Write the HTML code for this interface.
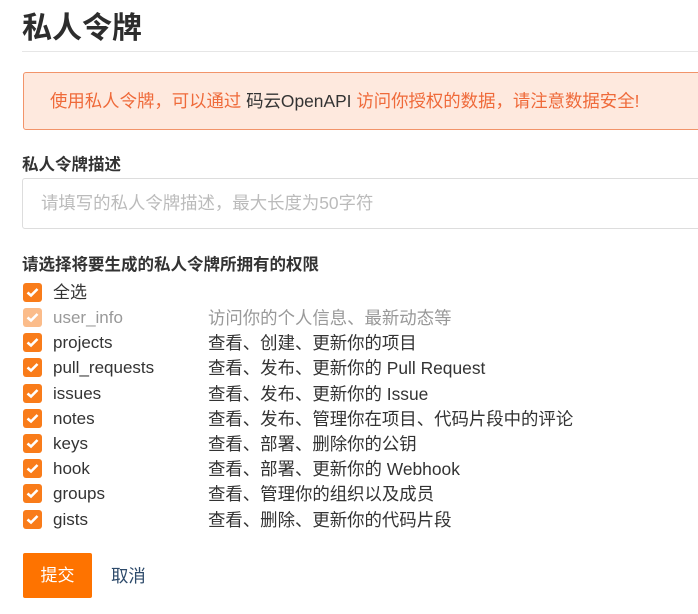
<!DOCTYPE html>
<html><head><meta charset="utf-8"><style>
body{margin:0;width:698px;height:614px;overflow:hidden;background:#fff;font-family:"Liberation Sans","Noto Sans CJK SC",sans-serif;color:#333;position:relative}
.a{position:absolute;white-space:nowrap}
h1{position:absolute;left:22px;top:9px;margin:0;font-size:30px;font-weight:bold;color:#2d2d2d;line-height:40px;white-space:nowrap}
.line{position:absolute;left:22px;top:51px;width:700px;height:1px;background:#e6e6e6}
.alert{position:absolute;left:23px;top:72px;width:700px;height:58px;background:#fee9de;border:1px solid #f2946a;border-radius:3px;box-sizing:border-box;font-size:17.4px;line-height:56px;padding-left:26px;color:#ef6a3a;white-space:nowrap}
.alert span{color:#333}
.lbl{font-size:16.5px;font-weight:bold;color:#333}
.input{position:absolute;left:22px;top:178px;width:700px;height:51px;border:1px solid #ddd;border-radius:3px;box-sizing:border-box;font-size:17.4px;color:#bbb;line-height:49px;padding-left:18px;white-space:nowrap}
.row{position:absolute;left:23px;width:680px;height:20px;font-size:17.4px;line-height:20px;white-space:nowrap}
.cb{position:absolute;left:0;top:0;width:19px;height:19px;background:#f97c1a;border-radius:3px}
.cb svg{position:absolute;left:3px;top:4px}
.n{position:absolute;left:30px;top:0;color:#333;font-size:17px}
.d{position:absolute;left:185px;top:0;color:#333}
.dis .cb{background:#fbbc8a}.dis .n,.dis .d{color:#999}
.btn{position:absolute;left:23px;top:553px;width:69px;height:45px;background:#fe7300;border-radius:2px;color:#fff;font-size:17px;line-height:45px;text-align:center}
</style></head><body>
<h1>私人令牌</h1>
<div class="line"></div>
<div class="alert">使用私人令牌，可以通过 <span>码云OpenAPI</span> 访问你授权的数据，请注意数据安全!</div>
<div class="a lbl" style="left:22px;top:151px">私人令牌描述</div>
<div class="input">请填写的私人令牌描述，最大长度为50字符</div>
<div class="a lbl" style="left:22px;top:251px">请选择将要生成的私人令牌所拥有的权限</div>
<div class="row" style="top:283px"><div class="cb"><svg width="13" height="11" viewBox="0 0 13 11"><path d="M1.5 5.5L5 8.5L11.5 2" stroke="#fff" stroke-width="2.6" fill="none"/></svg></div><div class="n">全选</div></div>
<div class="row dis" style="top:308px"><div class="cb"><svg width="13" height="11" viewBox="0 0 13 11"><path d="M1.5 5.5L5 8.5L11.5 2" stroke="#fff" stroke-width="2.6" fill="none"/></svg></div><div class="n">user_info</div><div class="d">访问你的个人信息、最新动态等</div></div>
<div class="row" style="top:333px"><div class="cb"><svg width="13" height="11" viewBox="0 0 13 11"><path d="M1.5 5.5L5 8.5L11.5 2" stroke="#fff" stroke-width="2.6" fill="none"/></svg></div><div class="n">projects</div><div class="d">查看、创建、更新你的项目</div></div>
<div class="row" style="top:358px"><div class="cb"><svg width="13" height="11" viewBox="0 0 13 11"><path d="M1.5 5.5L5 8.5L11.5 2" stroke="#fff" stroke-width="2.6" fill="none"/></svg></div><div class="n">pull_requests</div><div class="d">查看、发布、更新你的 Pull Request</div></div>
<div class="row" style="top:384px"><div class="cb"><svg width="13" height="11" viewBox="0 0 13 11"><path d="M1.5 5.5L5 8.5L11.5 2" stroke="#fff" stroke-width="2.6" fill="none"/></svg></div><div class="n">issues</div><div class="d">查看、发布、更新你的 Issue</div></div>
<div class="row" style="top:409px"><div class="cb"><svg width="13" height="11" viewBox="0 0 13 11"><path d="M1.5 5.5L5 8.5L11.5 2" stroke="#fff" stroke-width="2.6" fill="none"/></svg></div><div class="n">notes</div><div class="d">查看、发布、管理你在项目、代码片段中的评论</div></div>
<div class="row" style="top:434px"><div class="cb"><svg width="13" height="11" viewBox="0 0 13 11"><path d="M1.5 5.5L5 8.5L11.5 2" stroke="#fff" stroke-width="2.6" fill="none"/></svg></div><div class="n">keys</div><div class="d">查看、部署、删除你的公钥</div></div>
<div class="row" style="top:459px"><div class="cb"><svg width="13" height="11" viewBox="0 0 13 11"><path d="M1.5 5.5L5 8.5L11.5 2" stroke="#fff" stroke-width="2.6" fill="none"/></svg></div><div class="n">hook</div><div class="d">查看、部署、更新你的 Webhook</div></div>
<div class="row" style="top:484px"><div class="cb"><svg width="13" height="11" viewBox="0 0 13 11"><path d="M1.5 5.5L5 8.5L11.5 2" stroke="#fff" stroke-width="2.6" fill="none"/></svg></div><div class="n">groups</div><div class="d">查看、管理你的组织以及成员</div></div>
<div class="row" style="top:510px"><div class="cb"><svg width="13" height="11" viewBox="0 0 13 11"><path d="M1.5 5.5L5 8.5L11.5 2" stroke="#fff" stroke-width="2.6" fill="none"/></svg></div><div class="n">gists</div><div class="d">查看、删除、更新你的代码片段</div></div>
<div class="btn">提交</div>
<div class="a" style="left:111px;top:566px;font-size:17.4px;line-height:20px;color:#2d4a6a">取消</div>
</body></html>
